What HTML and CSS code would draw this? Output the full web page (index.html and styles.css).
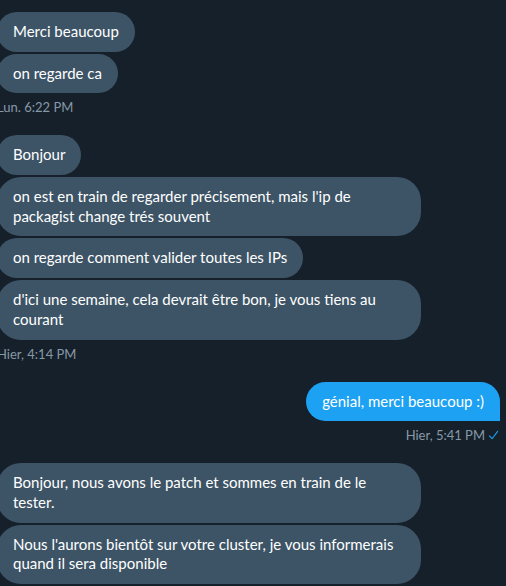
FILE: index.html
```html
<!DOCTYPE html>
<html lang="fr">
<head>
<meta charset="utf-8">
<link rel="stylesheet" href="styles.css">
</head>
<body>
<div class="thread">
  <div class="group received">
    <div class="bubble">Merci beaucoup</div>
    <div class="bubble last">on regarde ca</div>
    <div class="meta">Lun. 6:22 PM</div>
  </div>
  <div class="group received">
    <div class="bubble">Bonjour</div>
    <div class="bubble">on est en train de regarder précisement, mais l'ip de packagist change trés souvent</div>
    <div class="bubble">on regarde comment valider toutes les IPs</div>
    <div class="bubble last">d'ici une semaine, cela devrait être bon, je vous tiens au courant</div>
    <div class="meta">Hier, 4:14 PM</div>
  </div>
  <div class="group sent">
    <div class="bubble last">génial, merci beaucoup :)</div>
    <div class="meta">Hier, 5:41 PM<svg class="check" viewBox="0 0 12 12" width="12" height="12"><polyline points="1.5,6.5 4.5,9.5 10.5,1.5" fill="none" stroke="#1da1f2" stroke-width="1.2" stroke-linecap="round" stroke-linejoin="round"/></svg></div>
  </div>
  <div class="group received">
    <div class="bubble">Bonjour, nous avons le patch et sommes en train de le tester.</div>
    <div class="bubble last">Nous l'aurons bientôt sur votre cluster, je vous informerais quand il sera disponible</div>
  </div>
</div>
</body>
</html>
```
FILE: styles.css
```css
html, body {
  margin: 0;
  padding: 0;
  background: #15202b;
  overflow: hidden;
}
body {
  width: 506px;
  height: 586px;
  font-family: "Lato", "Liberation Sans", sans-serif;
}
.thread {
  display: flex;
  flex-direction: column;
  gap: 20px;
  padding: 12px 7px 0 0;
  margin-left: -3px;
}
.group {
  display: flex;
  flex-direction: column;
  gap: 2px;
}
.received {
  align-items: flex-start;
}
.sent {
  align-items: flex-end;
}
.bubble {
  font-size: 15px;
  line-height: 19.6875px;
  padding: 10px 16px;
  border-radius: 24px;
  color: #ffffff;
  max-width: 392px;
}
.received .bubble {
  background: #3d5466;
}
.sent .bubble {
  background: #1da1f2;
  margin-right: -1px;
}
.sent .bubble.last {
  border-bottom-right-radius: 0;
}
.meta {
  margin-top: 4px;
  font-size: 13px;
  line-height: 16px;
  color: #8899a6;
  display: flex;
  align-items: center;
  gap: 3px;
}
.check {
  display: block;
  width: 11px;
  height: 11px;
}
```
